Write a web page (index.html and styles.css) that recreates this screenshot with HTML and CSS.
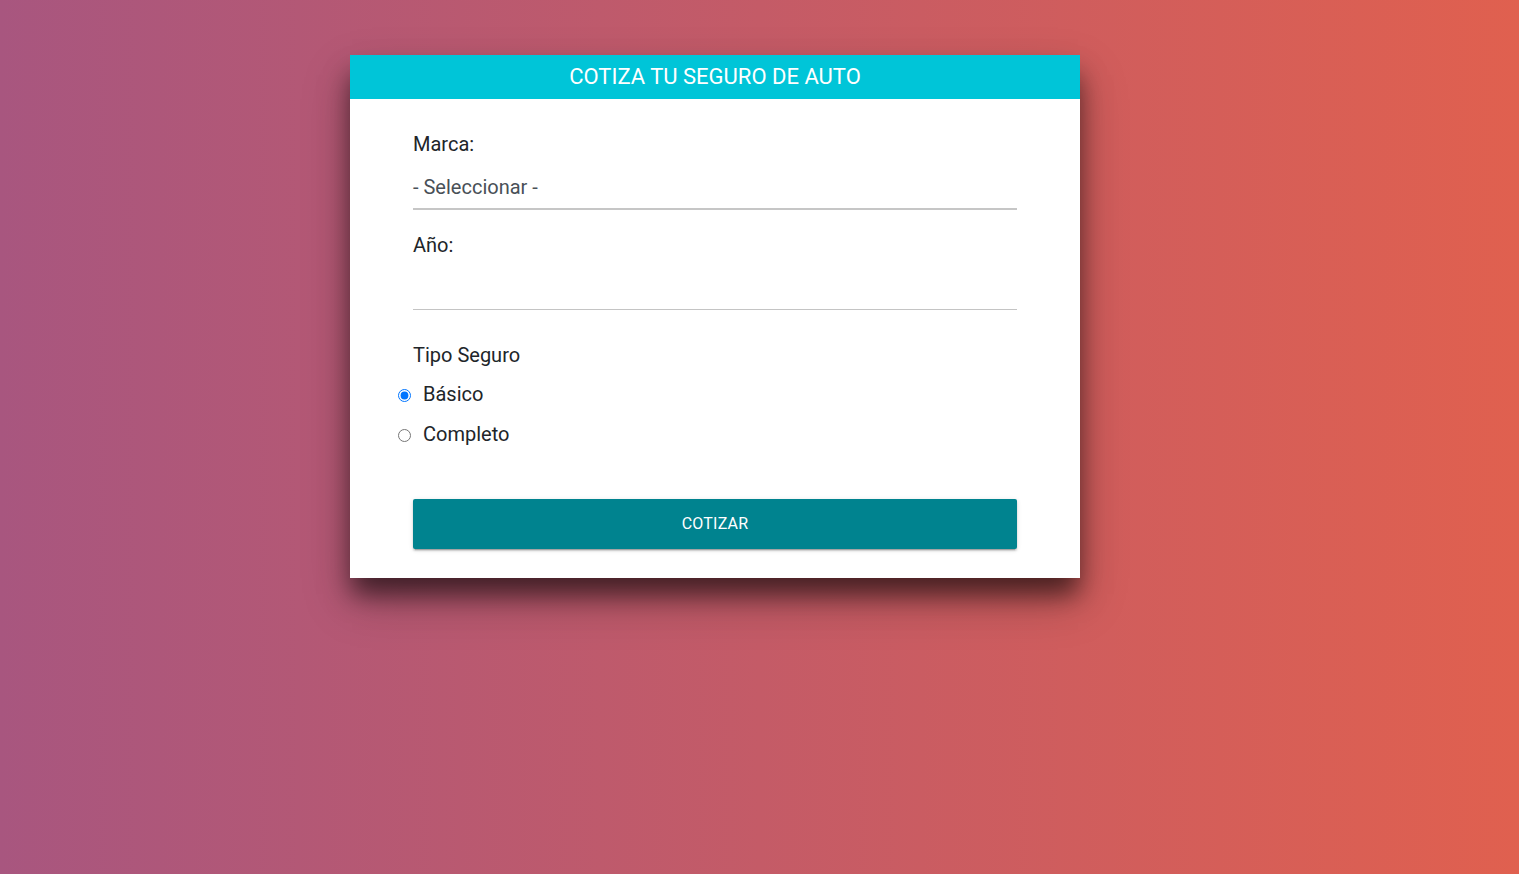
FILE: index.html
```html
<!DOCTYPE html>
<html lang="es">
<head>
<meta charset="utf-8">
<title>Cotizador</title>
<link rel="stylesheet" href="styles.css">
</head>
<body>
<main class="page">
  <section class="card">
    <header class="card-header">COTIZA TU SEGURO DE AUTO</header>
    <form class="form">
      <label class="label">Marca:</label>
      <div class="select">- Seleccionar -</div>
      <label class="label label-gap">Año:</label>
      <div class="input"></div>
      <div class="label label-tipo">Tipo Seguro</div>
      <div class="radios">
        <label class="radio-row"><input type="radio" name="tipo" checked><span>Básico</span></label>
        <label class="radio-row"><input type="radio" name="tipo"><span>Completo</span></label>
      </div>
      <button type="button" class="btn">COTIZAR</button>
    </form>
  </section>
</main>
</body>
</html>
```

FILE: styles.css
```css
html, body {
  margin: 0;
  padding: 0;
  height: 100%;
}
body {
  background: linear-gradient(to right, #a8567f 0%, #e0604f 100%);
  font-family: Roboto, "Noto Sans", Arial, sans-serif;
}
.page {
  display: flex;
  padding-top: 55px;
  padding-left: 350px;
}
.card {
  width: 730px;
  background: #fff;
  box-shadow: 0 18px 24px -2px rgba(0, 0, 0, 0.55), 0 22px 44px 0 rgba(0, 0, 0, 0.25);
}
.card-header {
  height: 44px;
  background: #00c5d8;
  color: #fff;
  font-size: 22px;
  line-height: 44px;
  text-align: center;
}
.form {
  display: flex;
  flex-direction: column;
  padding: 33px 63px 29px 63px;
}
.label {
  font-size: 20px;
  line-height: 24px;
  color: #212529;
}
.select {
  margin-top: 11px;
  height: 41px;
  line-height: 40px;
  font-size: 20px;
  color: #495057;
  border-bottom: 2px solid #c6c6c6;
}
.label-gap {
  margin-top: 23px;
}
.input {
  margin-top: 4px;
  height: 48px;
  border-bottom: 1px solid #c4c4c4;
}
.label-tipo {
  margin-top: 33px;
}
.radios {
  display: flex;
  flex-direction: column;
  margin-top: 7px;
  margin-left: -17px;
}
.radio-row {
  display: flex;
  align-items: center;
  height: 40px;
  font-size: 20px;
  color: #212529;
}
.radio-row input {
  width: 13px;
  height: 13px;
  margin: 2px 12px 0 2px;
}
.btn {
  margin-top: 45px;
  height: 50px;
  padding: 0 0 2px 0;
  border: none;
  border-radius: 2px;
  background: #00838f;
  color: #fff;
  font-family: Roboto, "Noto Sans", Arial, sans-serif;
  font-size: 16px;
  font-weight: 400;
  letter-spacing: 0.2px;
  box-shadow: 0 2px 2px 0 rgba(0, 0, 0, 0.14), 0 1px 5px 0 rgba(0, 0, 0, 0.12), 0 3px 1px -2px rgba(0, 0, 0, 0.2);
  cursor: pointer;
}
```
